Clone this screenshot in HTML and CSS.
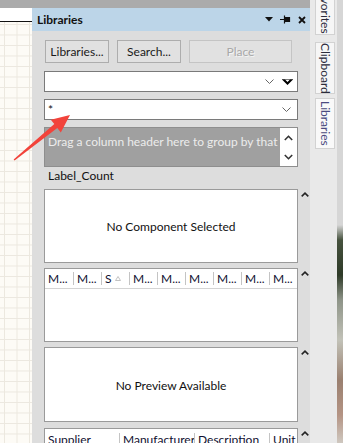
FILE: index.html
```html
<!DOCTYPE html>
<html>
<head>
<meta charset="utf-8">
<link rel="stylesheet" href="styles.css">
</head>
<body>
<div class="screen">
  <div class="main">
    <div class="topbar"></div>
    <div class="work">
      <div class="canvas">
        <div class="canvas-top"></div>
        <div class="canvas-grid"></div>
      </div>
      <div class="panel">
        <div class="panel-head">
          <span class="title">Libraries</span>
          <span class="head-icons">
            <svg width="8" height="5" viewBox="0 0 8 5"><polygon points="0,0 8,0 4,4.5" fill="#111"/></svg>
            <svg width="11" height="9" viewBox="0 0 11 9"><path d="M0 4.5H4M4.5 0.5V8.5M4.5 2.5H9.5V6.5H4.5Z" stroke="#111" stroke-width="1.2" fill="#111"/></svg>
            <svg width="8" height="8" viewBox="0 0 8 8"><path d="M1 1L7 7M7 1L1 7" stroke="#111" stroke-width="1.8"/></svg>
          </span>
        </div>
        <div class="panel-body">
          <div class="btnrow">
            <div class="btn btn-lib">Libraries...</div>
            <div class="btn btn-search">Search...</div>
            <div class="btn btn-place">Place</div>
          </div>
          <div class="combo combo1">
            <span class="combo-text"></span>
            <svg class="chev-thin" width="9" height="5" viewBox="0 0 9 5"><polyline points="0.5,0.5 4.5,4.5 8.5,0.5" fill="none" stroke="#666" stroke-width="1"/></svg>
            <svg class="chev-black" width="11" height="6" viewBox="0 0 11 6"><path d="M0 0.5H3L5.5 3L8 0.5H11L5.5 6Z" fill="#000"/><path d="M0 0H11" stroke="#000" stroke-width="1"/></svg>
          </div>
          <div class="combo combo2">
            <span class="combo-text">*</span>
            <svg class="chev-thin" width="9" height="5" viewBox="0 0 9 5"><polyline points="0.5,0.5 4.5,4.5 8.5,0.5" fill="none" stroke="#666" stroke-width="1"/></svg>
          </div>
          <div class="group">
            <div class="group-text">Drag a column header here to group by that column</div>
            <div class="group-scroll">
              <svg width="9" height="6" viewBox="0 0 9 6"><polyline points="0.8,5 4.5,1.3 8.2,5" fill="none" stroke="#333" stroke-width="1.6"/></svg>
              <svg width="9" height="6" viewBox="0 0 9 6"><polyline points="0.8,1 4.5,4.7 8.2,1" fill="none" stroke="#333" stroke-width="1.6"/></svg>
            </div>
          </div>
          <div class="label">Label_Count</div>
          <div class="row row-box1">
            <div class="box">No Component Selected</div>
            <div class="side-chev"><svg width="8" height="5" viewBox="0 0 8 5"><polyline points="0.7,4.3 4,1.2 7.3,4.3" fill="none" stroke="#222" stroke-width="1.6"/></svg></div>
          </div>
          <div class="row row-grid">
            <div class="grid">
              <div class="grid-head">
                <div class="gcell">M...</div>
                <div class="gcell">M...</div>
                <div class="gcell">S<svg class="sort" width="6" height="5" viewBox="0 0 6 5"><polygon points="3,0.5 5.5,4.5 0.5,4.5" fill="none" stroke="#bbb" stroke-width="0.9"/></svg></div>
                <div class="gcell">M...</div>
                <div class="gcell">M...</div>
                <div class="gcell">M...</div>
                <div class="gcell">M...</div>
                <div class="gcell">M...</div>
                <div class="gcell">M...</div>
              </div>
            </div>
            <div class="side-chev"><svg width="8" height="5" viewBox="0 0 8 5"><polyline points="0.7,4.3 4,1.2 7.3,4.3" fill="none" stroke="#222" stroke-width="1.6"/></svg></div>
          </div>
          <div class="row row-box2">
            <div class="box">No Preview Available</div>
            <div class="side-chev"><svg width="8" height="5" viewBox="0 0 8 5"><polyline points="0.7,4.3 4,1.2 7.3,4.3" fill="none" stroke="#222" stroke-width="1.6"/></svg></div>
          </div>
          <div class="row row-grid2">
            <div class="grid grid2">
              <div class="grid-head">
                <div class="gcell c-sup">Supplier</div>
                <div class="gcell c-man">Manufacturer</div>
                <div class="gcell c-desc">Description</div>
                <div class="gcell c-unit">Unit</div>
              </div>
            </div>
            <div class="side-chev"><svg width="8" height="5" viewBox="0 0 8 5"><polyline points="0.7,4.3 4,1.2 7.3,4.3" fill="none" stroke="#222" stroke-width="1.6"/></svg></div>
          </div>
        </div>
      </div>
    </div>
  </div>
  <div class="side">
    <div class="tabs">
      <div class="tab tab-fav">Favorites</div>
      <div class="tab tab-clip">Clipboard</div>
      <div class="tab tab-lib">Libraries</div>
    </div>
    <div class="edge"></div>
  </div>
  <svg class="arrow" width="90" height="70" viewBox="0 100 90 70">
    <polygon points="13.6,159.4 54.3,124.1 50.8,119.8 70,115 60.8,132.4 57.3,128.1 14.6,160.4" fill="#f2433b"/>
  </svg>
</div>
</body>
</html>
```
FILE: styles.css
```css
* { box-sizing: border-box; }
html, body { margin: 0; padding: 0; }
body {
  width: 343px;
  height: 443px;
  overflow: hidden;
  font-family: Lato, "Liberation Sans", sans-serif;
  font-size: 12px;
  color: #111;
}
.screen {
  position: relative;
  display: flex;
  width: 343px;
  height: 443px;
  overflow: hidden;
}
.main {
  width: 310px;
  height: 443px;
  display: flex;
  flex-direction: column;
  overflow: hidden;
}
.main > *, .canvas > *, .panel > *, .panel-body > * { flex-shrink: 0; }
.topbar {
  height: 8px;
  background: #ababab;
}
.work {
  flex: 1 1 auto !important;
  display: flex;
  min-height: 0;
  overflow: hidden;
}
.canvas {
  width: 32px;
  display: flex;
  flex-direction: column;
}
.canvas-top {
  height: 14px;
  background: #fff;
  border-bottom: 1px solid #111;
}
.canvas-grid {
  flex: 1 1 auto !important;
  background-color: #fdfbf6;
  background-image:
    linear-gradient(to right, #ece8df 1px, transparent 1px),
    linear-gradient(to bottom, #ece8df 1px, transparent 1px);
  background-size: 12.5px 10.5px;
  background-position: 4px 2px;
}
.panel {
  flex: 1;
  display: flex;
  flex-direction: column;
  background: #dddddd;
  overflow: hidden;
}
.panel-head {
  height: 23px;
  background: #bcd5e8;
  display: flex;
  align-items: center;
  justify-content: space-between;
  padding: 0 4px 0 5px;
}
.title {
  font-weight: bold;
  font-size: 12px;
  color: #111;
}
.head-icons {
  display: flex;
  align-items: center;
  gap: 7px;
}
.panel-body {
  padding: 9px 0 0 12px;
  display: flex;
  flex-direction: column;
}
.btnrow {
  display: flex;
  height: 23px;
  padding-left: 1px;
  gap: 8px;
}
.btn {
  height: 23px;
  border: 1px solid #adadad;
  background: #e1e1e1;
  display: flex;
  align-items: center;
  justify-content: center;
  color: #1a1a1a;
}
.btn-lib { width: 64px; }
.btn-search { width: 64px; }
.btn-place {
  width: 103px;
  border-color: #c4c4c4;
  color: #a8a8a8;
  text-shadow: 1px 1px 0 #f4f4f4;
}
.combo {
  width: 254px;
  height: 21px;
  border: 1px solid #7a7a7a;
  background: #fff;
  display: flex;
  align-items: center;
  padding: 0 3px 0 3px;
}
.combo-text { flex: 1; line-height: 12px; }
.combo1 { margin-top: 8px; }
.combo2 { margin-top: 7px; }
.combo1 .chev-thin { margin-right: 8px; }
.combo2 .chev-thin { margin-right: 3px; }
.chev-black { margin-right: 1px; }
.group {
  margin-top: 7px;
  width: 254px;
  height: 40px;
  background: #a0a0a0;
  border: 1px solid #8e8e8e;
  display: flex;
}
.group-text {
  flex: 1;
  overflow: hidden;
  white-space: nowrap;
  color: #ececec;
  padding: 7px 0 0 3px;
  line-height: 14px;
}
.group-scroll {
  width: 17px;
  background: #fff;
  display: flex;
  flex-direction: column;
  align-items: center;
  justify-content: space-between;
  padding: 7px 0 6px 0;
}
.label {
  height: 16px;
  line-height: 14px;
  padding: 2px 0 0 4px;
}
.row {
  display: flex;
}
.side-chev {
  width: 12px;
  display: flex;
  justify-content: center;
  padding-top: 3px;
  padding-left: 1px;
}
.box {
  width: 254px;
  background: #fff;
  border: 1px solid #9a9a9a;
  display: flex;
  align-items: center;
  justify-content: center;
}
.row-box1 { margin-top: 6px; height: 74px; }
.row-grid { margin-top: 5px; height: 74px; }
.row-box2 { margin-top: 5px; height: 75px; }
.row-grid2 { margin-top: 6px; height: 30px; }
.row-box2 .box { padding-top: 1px; }
.grid {
  width: 254px;
  background: #fff;
  border: 1px solid #9a9a9a;
}
.grid-head {
  display: flex;
  height: 20px;
  padding: 3px 0;
  border-bottom: 1px solid #d4d4d4;
  background: #fff;
}
.gcell {
  width: 28px;
  height: 13px;
  line-height: 13px;
  padding-left: 3px;
  border-left: 1px solid #c4c4c4;
  white-space: nowrap;
  overflow: hidden;
  color: #101030;
  display: flex;
  align-items: center;
  flex-shrink: 0;
}
.gcell:first-child { border-left: none; }
.sort { margin-left: 3px; }
.grid2 .grid-head { padding-top: 4px; height: 22px; }
.grid2 .gcell { height: 14px; line-height: 14px; }
.gcell.c-sup { width: 74px; }
.gcell.c-man { width: 75px; }
.gcell.c-desc { width: 75px; }
.gcell.c-unit { width: 28px; }
.side {
  width: 33px;
  display: flex;
  background: #e9e9e9;
}
.tabs {
  width: 27px;
  display: flex;
  flex-direction: column;
  align-items: center;
  padding-left: 3px;
}
.tab {
  width: 20px;
  background: #f6f6f6;
  border: 1px solid #d2d2d2;
  writing-mode: vertical-rl;
  display: flex;
  align-items: center;
  justify-content: center;
  font-size: 12px;
  color: #2c2c3c;
  line-height: 18px;
  flex-shrink: 0;
}
.tab-fav { height: 51px; margin-top: -16px; }
.tab-clip { height: 52px; margin-top: 7px; }
.tab-lib { height: 51px; margin-top: 4px; color: #4a4a80; background: #f9f9f9; }
.edge {
  width: 6px;
  background: linear-gradient(to bottom, #d6d6d6 0, #d6d6d6 225px, #46523e 240px, #2e3a28 275px, #8e9488 300px, #c2c2b8 340px, #9a8070 380px, #b49484 415px, #cfc8c0 443px);
}
.arrow {
  position: absolute;
  left: 0;
  top: 100px;
}
```
